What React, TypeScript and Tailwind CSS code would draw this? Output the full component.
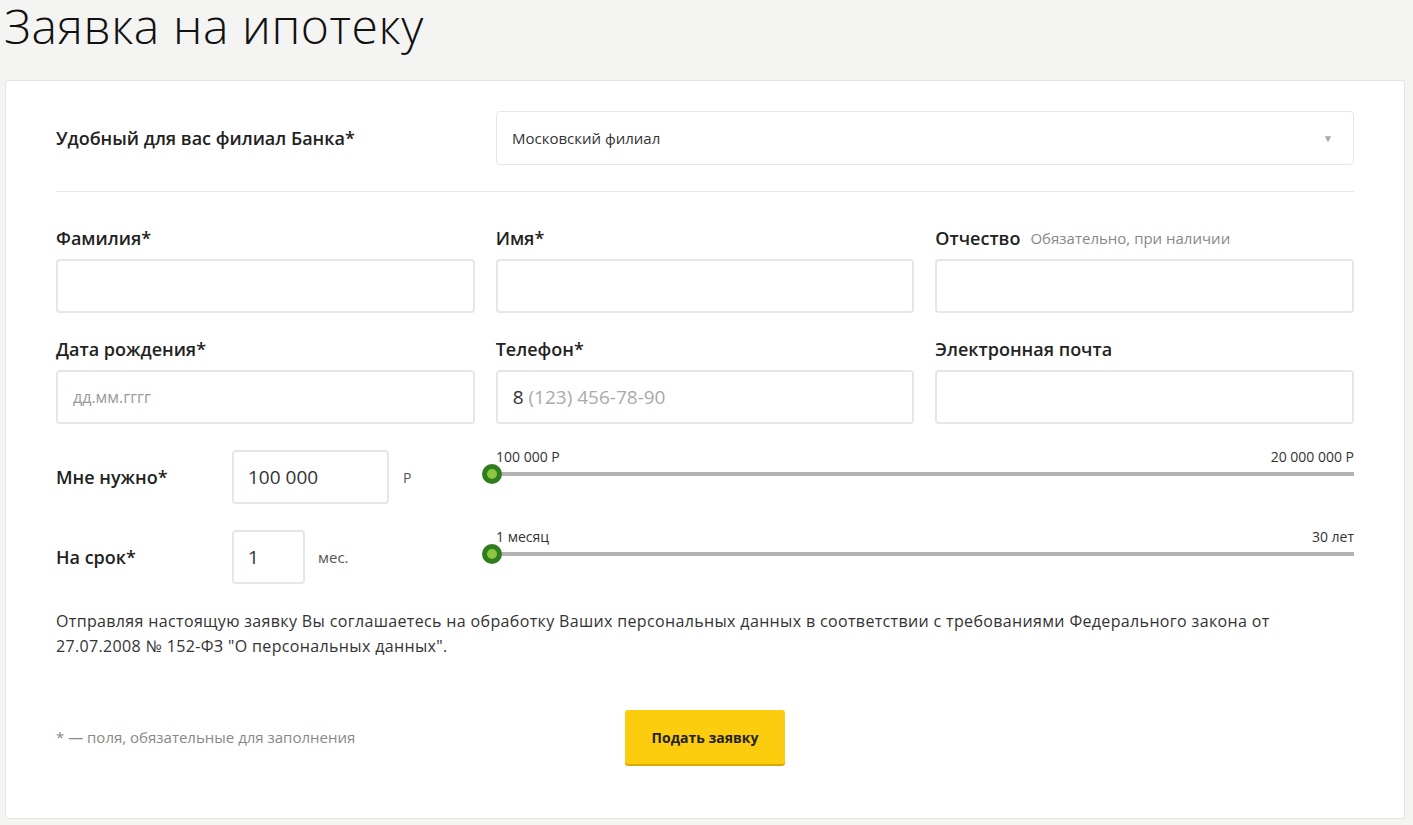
import React from "react";

const font = { fontFamily: "'Open Sans', Lato, sans-serif" };

function Label({ children, note }: { children: React.ReactNode; note?: string }) {
  return (
    <div className="flex h-5 items-center whitespace-nowrap text-[18px] font-semibold leading-5 text-[#222]">
      {children}
      {note && <span className="ml-[10px] text-[15px] font-normal text-[#888]">{note}</span>}
    </div>
  );
}

function Field({ label, note, children }: { label: React.ReactNode; note?: string; children?: React.ReactNode }) {
  return (
    <div className="flex flex-col gap-[11px]">
      <Label note={note}>{label}</Label>
      <div className="flex h-[54px] items-center rounded-[4px] border-2 border-[#e6e6e6] bg-white px-[15px] text-[19px] text-[#aaa]">
        {children}
      </div>
    </div>
  );
}

function Slider({ min, max }: { min: string; max: string }) {
  return (
    <div className="flex-1">
      <div className="flex h-[14px] items-center justify-between pl-[4px] text-[14px] leading-[14px] text-[#333]">
        <span>{min}</span>
        <span>{max}</span>
      </div>
      <div className="relative mt-[8px] h-[4px] bg-[#b3b3b3]">
        <div className="absolute left-[-10px] top-1/2 h-[20px] w-[20px] -translate-y-1/2 rounded-full border-[5px] border-[#2f7d1e] bg-[#8dc63f]" />
      </div>
    </div>
  );
}

export default function App() {
  return (
    <div className="min-h-[825px] bg-[#f4f4f2] pb-[6px]" style={font}>
      <div className="h-[80px] pl-[4px] pt-[1px]">
        <h1 className="text-[48px] font-light leading-[50px] tracking-[0.6px] text-[#111]">Заявка на ипотеку</h1>
      </div>
      <div className="ml-[5px] mr-[8px] rounded-[3px] border border-[#e4e4e0] bg-white px-[50px] pb-[54px] pt-[30px]">
        <div className="flex items-center">
          <div className="w-[440px]">
            <Label>Удобный для вас филиал Банка*</Label>
          </div>
          <div className="flex h-[54px] flex-1 items-center justify-between rounded-[4px] border border-[#e6e6e6] px-[15px] text-[15px] text-[#333]">
            <span>Московский филиал</span>
            <span className="mr-[5px] text-[10px] text-[#aaa]">▼</span>
          </div>
        </div>
        <div className="mt-[26px] h-px bg-[#e8e8e8]" />
        <div className="mt-[36px] grid grid-cols-3 gap-x-[21px] gap-y-[26px]">
          <Field label="Фамилия*" />
          <Field label="Имя*" />
          <Field label="Отчество" note="Обязательно, при наличии" />
          <Field label="Дата рождения*">
            <span className="text-[16px] text-[#999]">дд.мм.гггг</span>
          </Field>
          <Field label="Телефон*">
            <span className="text-[#333]">8</span>&nbsp;(123) 456-78-90
          </Field>
          <Field label="Электронная почта" />
        </div>
        <div className="mt-[26px] flex items-start">
          <div className="flex w-[436px] items-center">
            <div className="w-[176px]"><Label>Мне нужно*</Label></div>
            <div className="flex h-[54px] w-[157px] items-center rounded-[4px] border-2 border-[#e6e6e6] px-[14px] text-[19px] text-[#333]">100 000</div>
            <span className="ml-[14px] text-[14px] text-[#555]">Р</span>
          </div>
          <Slider min="100 000 Р" max="20 000 000 Р" />
        </div>
        <div className="mt-[26px] flex items-start">
          <div className="flex w-[436px] items-center">
            <div className="w-[176px]"><Label>На срок*</Label></div>
            <div className="flex h-[54px] w-[73px] items-center rounded-[4px] border-2 border-[#e6e6e6] px-[14px] text-[19px] text-[#333]">1</div>
            <span className="ml-[13px] text-[15px] text-[#555]">мес.</span>
          </div>
          <Slider min="1 месяц" max="30 лет" />
        </div>
        <p className="mt-[25px] text-[16px] leading-[25px] tracking-[0.35px] text-[#333]">
          Отправляя настоящую заявку Вы соглашаетесь на обработку Ваших персональных данных в соответствии с требованиями Федерального закона от 27.07.2008 № 152-ФЗ "О персональных данных".
        </p>
        <div className="mt-[51px] flex items-center">
          <div className="w-[569px] text-[15px] text-[#888]">* — поля, обязательные для заполнения</div>
          <button className="h-[54px] w-[160px] rounded-[3px] bg-[#fccd0f] text-[14px] font-bold text-[#222] shadow-[0_2px_0_#d9ab00]">Подать заявку</button>
        </div>
      </div>
    </div>
  );
}
